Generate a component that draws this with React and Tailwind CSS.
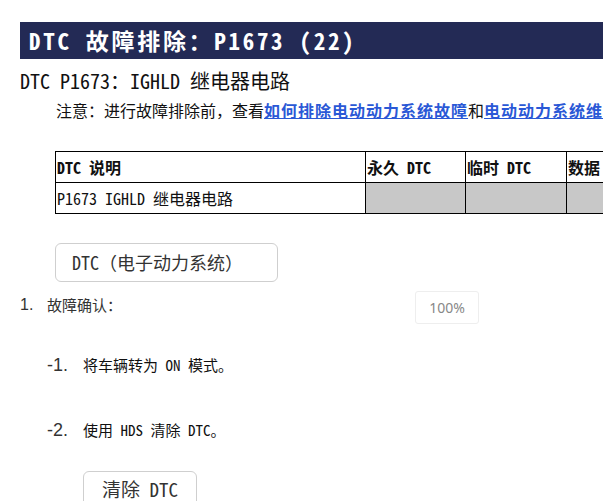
import React from "react";

const cjk = { fontFamily: "'Noto Sans Mono CJK SC', 'Noto Sans CJK SC', 'DejaVu Sans Mono', monospace" };

export default function App() {
  return (
    <div className="w-[603px] h-[501px] overflow-hidden bg-white text-[#111]" style={cjk}>
      <div className="pl-5 pt-[22px]">
        <h1 className="h-[37px] bg-[#232a55] text-white font-bold text-[23px] tracking-[2.7px] leading-none pl-[9px] flex items-center whitespace-nowrap">
          DTC 故障排除：P1673 (22)
        </h1>
        <h2 className="mt-[8px] text-[20px] leading-[28px] whitespace-nowrap">DTC P1673：IGHLD 继电器电路</h2>
        <p className="mt-[3px] pl-[36px] text-[16px] leading-[24px] whitespace-nowrap">
          注意：进行故障排除前，查看
          <a className="text-[#2a58d6] font-bold underline tracking-[1px]">如何排除电动动力系统故障</a>和
          <a className="text-[#2a58d6] font-bold underline tracking-[1px]">电动动力系统维修须知</a>
        </p>
        <table className="mt-[29px] ml-[35px] table-fixed border-collapse w-[620px] text-[16px]">
          <colgroup>
            <col className="w-[310px]" />
            <col className="w-[100px]" />
            <col className="w-[101px]" />
            <col className="w-[109px]" />
          </colgroup>
          <tbody>
            <tr className="h-[31px]">
              <td className="border border-black px-[1px] font-bold whitespace-nowrap overflow-hidden">DTC 说明</td>
              <td className="border border-black px-[1px] font-bold whitespace-nowrap overflow-hidden">永久 DTC</td>
              <td className="border border-black px-[1px] font-bold whitespace-nowrap overflow-hidden">临时 DTC</td>
              <td className="border border-black px-[1px] font-bold whitespace-nowrap overflow-hidden">数据</td>
            </tr>
            <tr className="h-[31px]">
              <td className="border border-black px-[1px] whitespace-nowrap">P1673 IGHLD 继电器电路</td>
              <td className="border border-black bg-[#c8c8c8]"></td>
              <td className="border border-black bg-[#c8c8c8]"></td>
              <td className="border border-black bg-[#c8c8c8]"></td>
            </tr>
          </tbody>
        </table>
        <button className="mt-[29px] ml-[35px] h-[39px] w-[223px] border border-[#cfcfcf] rounded-[6px] pl-[16px] text-left text-[18px] text-[#333] bg-white whitespace-nowrap">
          DTC（电子动力系统）
        </button>
      </div>
      <div className="mt-[9px] pl-5 flex items-start">
        <span className="w-[27px] text-[16px] leading-[24px] text-[#333] pt-[2px]" style={{ fontFamily: "'Liberation Sans', sans-serif" }}>1.</span>
        <span className="w-[70px] text-[15px] leading-[24px] text-[#333] pt-[2px] whitespace-nowrap">故障确认：</span>
        <div
          className="ml-[298px] w-[64px] h-[33px] border border-[#eeeeee] rounded-[3px] flex items-center justify-center text-[14px] text-[#888]"
          style={{ fontFamily: "'Noto Sans', sans-serif" }}
        >
          100%
        </div>
      </div>
      <div className="pl-[47px] mt-[29px] flex items-center h-[24px]">
        <span className="w-[36px] text-[18px] text-[#333]" style={{ fontFamily: "'Liberation Sans', sans-serif" }}>-1.</span>
        <span className="text-[15px] text-[#111]">将车辆转为 ON 模式。</span>
      </div>
      <div className="pl-[47px] mt-[41px] flex items-center h-[24px]">
        <span className="w-[36px] text-[18px] text-[#333]" style={{ fontFamily: "'Liberation Sans', sans-serif" }}>-2.</span>
        <span className="text-[15px] text-[#111]">使用 HDS 清除 DTC。</span>
      </div>
      <button className="mt-[29px] ml-[83px] h-[44px] w-[114px] border border-[#cfcfcf] rounded-[6px] pt-[5px] flex items-start justify-center text-[19px] leading-[24px] text-[#333] bg-white whitespace-nowrap">
        清除 DTC
      </button>
    </div>
  );
}
